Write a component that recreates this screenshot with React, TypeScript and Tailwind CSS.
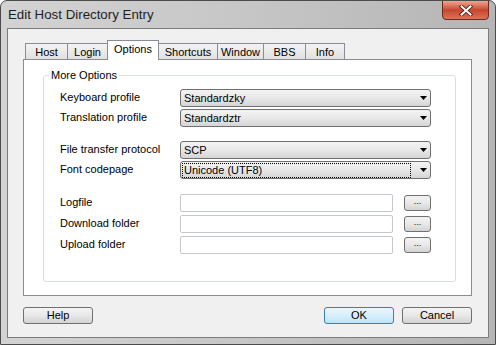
import React from 'react';

const tabs = [
  { name: 'Host', w: 'w-[43px]' },
  { name: 'Login', w: 'w-[41px]' },
  { name: 'Options', w: 'w-[52px]', active: true },
  { name: 'Shortcuts', w: 'w-[60px]' },
  { name: 'Window', w: 'w-[47px]' },
  { name: 'BBS', w: 'w-[43px]' },
  { name: 'Info', w: 'w-[40px]' },
];

function Arrow() {
  return (
    <svg width="7" height="4" viewBox="0 0 7 4" className="ml-auto shrink-0">
      <path d="M0 0h7L3.5 4z" fill="#000" />
    </svg>
  );
}

function Combo({ value, focused }: { value: string; focused?: boolean }) {
  return (
    <div className="flex h-[18px] w-[251px] items-center rounded-[3px] border border-[#707070] bg-gradient-to-b from-[#f3f3f3] via-[#e8e8e8] to-[#d5d5d5] pl-[1px] pr-[3px]">
      <div
        className={
          focused
            ? 'flex h-[15px] w-[229px] items-center border border-dotted border-black pl-[1px]'
            : 'flex h-[15px] w-[229px] items-center border border-transparent pl-[1px]'
        }
      >
        {value}
      </div>
      <Arrow />
    </div>
  );
}

function Row({ label, children }: { label: string; children: React.ReactNode }) {
  return (
    <div className="flex items-center">
      <div className="w-[120px] pb-[1px]">{label}</div>
      {children}
    </div>
  );
}

function PathRow({ label }: { label: string }) {
  return (
    <Row label={label}>
      <div className="h-[18px] w-[213px] rounded-[2px] border border-[#c5c9cf] bg-white" />
      <button className="ml-[11px] flex h-[16px] w-[27px] items-center justify-center rounded-[3px] border border-[#707070] bg-gradient-to-b from-[#f3f3f3] via-[#e8e8e8] to-[#d3d3d3] pb-[4px] text-[9px] leading-none">
        ...
      </button>
    </Row>
  );
}

function DlgButton({ label, primary }: { label: string; primary?: boolean }) {
  return (
    <button
      className={
        primary
          ? 'flex h-[17px] w-[70px] items-center justify-center rounded-[3px] border border-[#3c7fb1] bg-gradient-to-b from-[#eaf6fd] via-[#d7effc] to-[#bde4f8]'
          : 'flex h-[17px] w-[70px] items-center justify-center rounded-[3px] border border-[#707070] bg-gradient-to-b from-[#f3f3f3] via-[#e8e8e8] to-[#d3d3d3]'
      }
    >
      {label}
    </button>
  );
}

export default function App() {
  return (
    <div className="flex h-[345px] w-[496px] flex-col overflow-hidden rounded-t-[7px] border border-[#4b4b4b] bg-gradient-to-r from-[#d3d3d3] via-[#c6c6c6] to-[#b5b5b5] font-['Liberation_Sans',Arial,sans-serif] text-[11px] leading-[13px] text-black">
      {/* title bar */}
      <div className="flex h-[27px] shrink-0 items-start justify-between">
        <div className="pl-[7px] pt-[6px] text-[13.3px] leading-[16px] text-[#1e1e1e]">Edit Host Directory Entry</div>
        <div className="mr-[6px] -mt-[1px] flex h-[20px] w-[47px] items-center justify-center rounded-b-[4px] border border-[#6e2a1c] bg-gradient-to-b from-[#e9a695] via-[#c8452c] to-[#d8745a]">
          <svg width="14" height="11" viewBox="0 0 14 11">
            <path d="M2.5 1.5l9 8M11.5 1.5l-9 8" stroke="#4a1a10" strokeWidth="3.6" strokeLinecap="square" />
            <path d="M2.5 1.5l9 8M11.5 1.5l-9 8" stroke="#fff" strokeWidth="2" strokeLinecap="square" />
          </svg>
        </div>
      </div>

      {/* client area */}
      <div className="mx-[6px] mb-[6px] flex flex-1 flex-col border border-[#7c7c7c] bg-[#f0f0f0]">
        {/* tabs */}
        <div className="relative z-10 -mb-[1px] ml-[17px] mt-[11px] flex h-[20px] items-end">
          {tabs.map((t, i) =>
            t.active ? (
              <div
                key={t.name}
                className={`relative z-10 -ml-[1px] flex h-[20px] ${t.w} items-center justify-center border border-b-0 border-[#898c95] bg-white pb-[2px]`}
              >
                {t.name}
              </div>
            ) : (
              <div
                key={t.name}
                className={`${i === 0 ? '' : '-ml-[1px]'} flex h-[17px] ${t.w} items-center justify-center border border-[#898c95] bg-gradient-to-b from-[#f3f3f3] to-[#e1e1e1] pt-[1px]`}
              >
                {t.name}
              </div>
            )
          )}
        </div>

        {/* panel */}
        <div className="ml-[15px] h-[237px] w-[449px] border border-[#898c95] bg-white">
          <fieldset className="ml-[19px] mt-[9px] h-[213px] w-[413px] rounded-[3px] border border-[#d5dfe5] p-0">
            <legend className="ml-[5px] px-[2px]">More Options</legend>
            <div className="flex flex-col pl-[16px] pt-[7px]">
              <div className="flex flex-col gap-[2px]">
                <Row label="Keyboard profile">
                  <Combo value="Standardzky" />
                </Row>
                <Row label="Translation profile">
                  <Combo value="Standardztr" />
                </Row>
              </div>
              <div className="mt-[14px] flex flex-col gap-[2px]">
                <Row label="File transfer protocol">
                  <Combo value="SCP" />
                </Row>
                <Row label="Font codepage">
                  <Combo value="Unicode (UTF8)" focused />
                </Row>
              </div>
              <div className="mt-[15px] flex flex-col gap-[3px]">
                <PathRow label="Logfile" />
                <PathRow label="Download folder" />
                <PathRow label="Upload folder" />
              </div>
            </div>
          </fieldset>
        </div>

        {/* buttons */}
        <div className="ml-[15px] mr-[16px] mt-[11px] flex">
          <DlgButton label="Help" />
          <div className="ml-auto flex gap-[8px]">
            <DlgButton label="OK" primary />
            <DlgButton label="Cancel" />
          </div>
        </div>
      </div>
    </div>
  );
}
